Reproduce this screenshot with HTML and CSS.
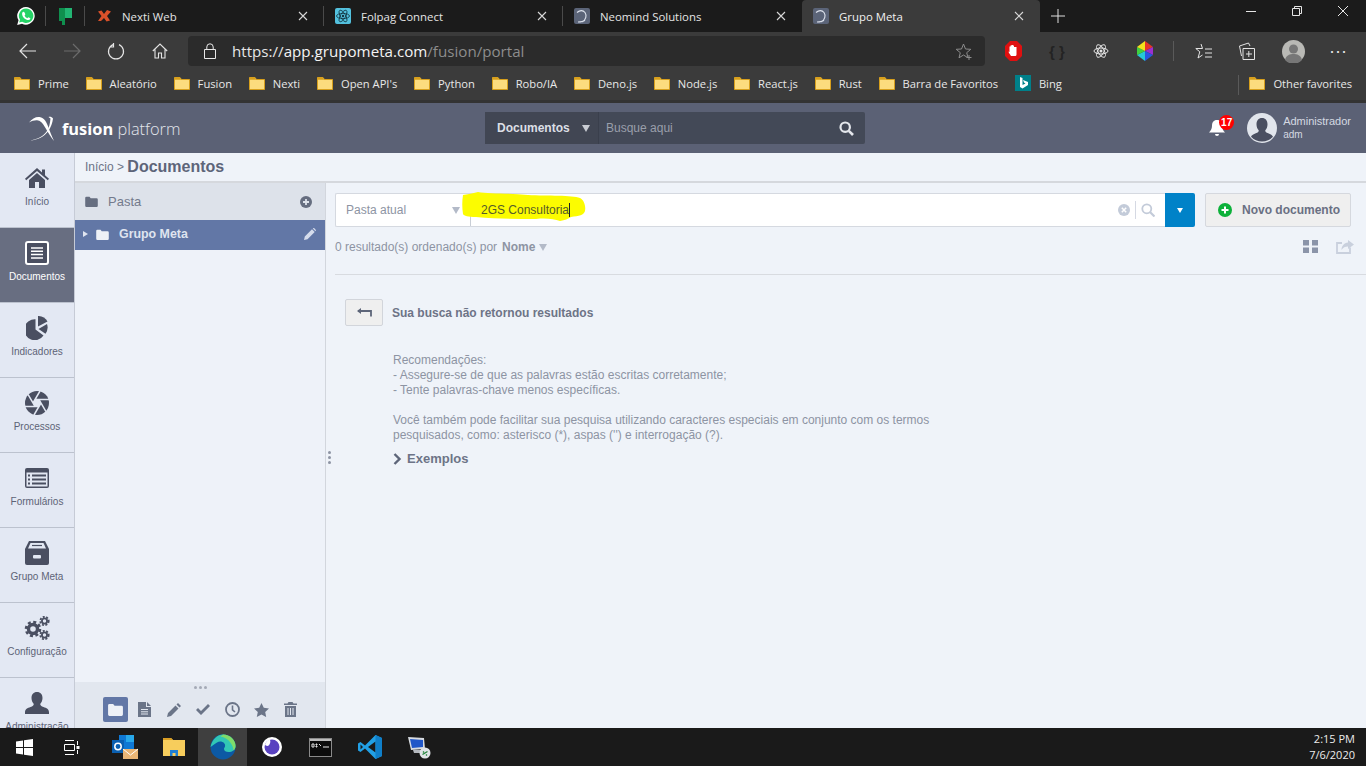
FILE: index.html
```html
<!DOCTYPE html>
<html lang="en">
<head>
    <meta charset="UTF-8">
    <title>Grupo Meta</title>
    <link rel="stylesheet" href="styles.css">
</head>
<body>
    <svg class="defs" width="0" height="0">
        <symbol id="bm-folder" viewBox="0 0 16 16"><path d="M.5 2.500h5.500l1.500 2h8v10H.5z" fill="#fcdc7e" stroke="#d79f1c"/><path d="M1 3h5l1.300 1.700H1z" fill="#d79f1c"/></symbol>
        <symbol id="fusion-mark" viewBox="0 0 16 16"><rect width="16" height="16" rx="2" fill="#5b6478"/><path d="M3 4.500c3-2.500 6-2.500 8 0 2 3 1 7-2.500 9.500M4 14c3 0 5.500-.5 7-2" fill="none" stroke="#dfe4ee" stroke-width="1.100"/></symbol>
        <symbol id="close-x" viewBox="0 0 10 10"><path d="M1 1l8 8M9 1l-8 8" stroke="#d8d8d8" stroke-width="1.100"/></symbol>
        <symbol id="fa-folder" viewBox="0 0 16 14"><path d="M1.500 1h4l1.500 2h7.500A1.500 1.500 0 0 1 16 4.500v8a1.500 1.500 0 0 1-1.500 1.500h-13A1.500 1.500 0 0 1 0 12.500v-10A1.500 1.500 0 0 1 1.500 1z"/></symbol>
    </svg>

    <div class="tabstrip">
        <div class="pin pin-first">
            <svg width="20" height="20" viewBox="0 0 20 20"><path d="M10 1a8.800 8.800 0 0 0-7.500 13.300L1.200 19l4.800-1.300A8.800 8.800 0 1 0 10 1z" fill="#fff"/><path d="M10 2.600a7.200 7.200 0 0 0-6 11.100l-.8 2.900 3-.8A7.200 7.200 0 1 0 10 2.600z" fill="#25d366"/><path d="M7.400 5.800c-.5 0-1.300.7-1.300 2.100 0 2.800 3.500 6.200 6.300 6.200 1.400 0 2-.9 2-1.500 0-.5-1.700-1.300-2-1.300-.4 0-.8.900-1.100.9-.9-.2-2.500-1.700-2.700-2.700 0-.3.700-.7.700-1.100 0-.3-.7-2.600-1.900-2.600z" fill="#fff"/></svg>
        </div>
        <div class="pin">
            <svg width="13" height="17" viewBox="0 0 13 17"><path d="M0 0h6v17H3V13H0z" fill="#0f8f4e"/><path d="M6 0h7v10H6z" fill="#22b573"/></svg>
        </div>
        <div class="tab">
            <svg class="tab-icon" width="16" height="12" viewBox="-2 0 16 12"><path d="M0 1.500l3.500-1 2.500 3.500L9 0l4 1.500-4 4.500 3 4.500-3.500 1-2.500-3.500-3 3L0 11l3.500-5z" fill="#d9512a"/></svg>
            <span class="tab-title">Nexti Web</span>
            <svg class="tab-close" width="10" height="10"><use href="#close-x"/></svg>
        </div>
        <div class="tab">
            <svg class="tab-icon" width="16" height="16" viewBox="0 0 16 16"><rect width="16" height="16" rx="2" fill="#53c1de"/><g fill="none" stroke="#12343f" stroke-width=".8"><ellipse cx="8" cy="8" rx="6.500" ry="2.600"/><ellipse cx="8" cy="8" rx="6.500" ry="2.600" transform="rotate(60 8 8)"/><ellipse cx="8" cy="8" rx="6.500" ry="2.600" transform="rotate(120 8 8)"/></g><circle cx="8" cy="8" r="1.200" fill="#12343f"/></svg>
            <span class="tab-title">Folpag Connect</span>
            <svg class="tab-close" width="10" height="10"><use href="#close-x"/></svg>
        </div>
        <div class="tab tab-last">
            <svg class="tab-icon" width="16" height="16"><use href="#fusion-mark"/></svg>
            <span class="tab-title">Neomind Solutions</span>
            <svg class="tab-close" width="10" height="10"><use href="#close-x"/></svg>
        </div>
        <div class="tab tab-active">
            <svg class="tab-icon" width="16" height="16"><use href="#fusion-mark"/></svg>
            <span class="tab-title">Grupo Meta</span>
            <svg class="tab-close" width="10" height="10"><use href="#close-x"/></svg>
        </div>
        <svg class="new-tab" width="14" height="14" viewBox="0 0 14 14"><path d="M7 0v14M0 7h14" stroke="#e0e0e0"/></svg>
        <div class="window-buttons">
            <svg width="10" height="10" viewBox="0 0 10 10"><path d="M0 5.500h10" stroke="#e6e6e6"/></svg>
            <svg width="10" height="10" viewBox="0 0 10 10"><path d="M.5 2.500h7v7h-7zM2.500 2.500v-2h7v7h-2" fill="none" stroke="#e6e6e6"/></svg>
            <svg width="10" height="10" viewBox="0 0 10 10"><path d="M0 0l10 10M10 0L0 10" stroke="#e6e6e6"/></svg>
        </div>
    </div>

    <div class="toolbar">
        <svg class="tool" width="18" height="16" viewBox="0 0 18 16"><path d="M17 8H1M8 1L1 8l7 7" fill="none" stroke="#e4e4e4" stroke-width="1.200"/></svg>
        <svg class="tool" width="18" height="16" viewBox="0 0 18 16"><path d="M1 8h16M10 1l7 7-7 7" fill="none" stroke="#6c6c6c" stroke-width="1.200"/></svg>
        <svg class="tool" width="18" height="18" viewBox="0 0 18 18"><path d="M6 2.600A7.500 7.500 0 1 0 12 2.600M6.500 1v4H2.500" fill="none" stroke="#e4e4e4" stroke-width="1.200"/></svg>
        <svg class="tool" width="16" height="16" viewBox="0 0 16 16"><path d="M.8 8L8 1l7.200 7M3 6.500V15h3.500v-5h3v5H13V6.500" fill="none" stroke="#e4e4e4" stroke-width="1.100"/></svg>
        <div class="address">
            <svg class="lock" width="12" height="16" viewBox="0 0 12 16"><path d="M.5 6.500h11v9H.5zM2.800 6.500V4a3.200 3.200 0 0 1 6.400 0v2.500" fill="none" stroke="#e8e8e8"/></svg>
            <span class="url">https://<b>app.grupometa.com</b><i>/fusion/portal</i></span>
            <svg class="fav-add" width="17" height="17" viewBox="0 0 17 17"><path d="M7.500 1l2 5 5.300.3-4.100 3.400 1.300 5.100-4.500-2.800L3 14.800l1.300-5.100L.2 6.300 5.500 6z" fill="none" stroke="#8c8c8c"/><path d="M13 12v5M10.500 14.500h5" stroke="#8c8c8c"/></svg>
        </div>
        <div class="extensions">
            <svg width="17" height="20" viewBox="0 0 17 20"><path d="M5 0h7l5 5v10l-5 5H5l-5-5V5z" fill="#e01010"/><path d="M6 15c-1-2-2.500-3-2.500-4.500l1 .5V5.500h1V4.500h1v-.5h1.500v.5h1V6h1l1.500 0v7.500c0 1-.8 1.500-1.500 1.500z" fill="#fff"/></svg>
            <span class="ext-braces">{ }</span>
            <svg width="16" height="18" viewBox="0 0 16 18"><g fill="none" stroke="#e4e4e4"><ellipse cx="8" cy="9" rx="7" ry="3"/><ellipse cx="8" cy="9" rx="7" ry="3" transform="rotate(60 8 9)"/><ellipse cx="8" cy="9" rx="7" ry="3" transform="rotate(120 8 9)"/></g><circle cx="8" cy="9" r="1.500" fill="#e4e4e4"/></svg>
            <svg width="16" height="20" viewBox="0 0 16 20"><path d="M8 10L8 0 16 6z" fill="#e5342a"/><path d="M8 10l8-4v8z" fill="#9b2fd0"/><path d="M8 10l8 4-8 6z" fill="#2a55e0"/><path d="M8 10v10l-8-6z" fill="#25c9d8"/><path d="M8 10l-8 4V6z" fill="#3fd13f"/><path d="M8 10L0 6l8-6z" fill="#f3e21c"/></svg>
            <span class="tool-sep"></span>
            <svg width="17" height="17" viewBox="0 0 17 17"><path d="M6 1l1.500 4.500H.8l4 3.300L3 15l4.500-3" fill="none" stroke="#e4e4e4"/><path d="M10 6h7M10 10h7M10 14h7" stroke="#e4e4e4"/></svg>
            <svg width="16" height="18" viewBox="0 0 16 18"><path d="M4 6.500h11.500v11H4zM9.800 9v6M7 12h6" fill="none" stroke="#e4e4e4"/><path d="M2.500 14L.5 4l9-3 1.500 3" fill="none" stroke="#e4e4e4"/></svg>
            <svg width="23" height="23" viewBox="0 0 23 23"><circle cx="11.500" cy="11.500" r="11.500" fill="#b9b9b5"/><circle cx="11.500" cy="9" r="4.500" fill="#777"/><path d="M3 20c1-5 5-6 8.500-6s7.500 1 8.500 6a11.500 11.500 0 0 1-17 0z" fill="#777"/></svg>
            <span class="more-dots">···</span>
        </div>
    </div>

    <div class="bookmarks">
        <div class="bookmark"><svg width="16" height="16"><use href="#bm-folder"/></svg>Prime</div>
        <div class="bookmark"><svg width="16" height="16"><use href="#bm-folder"/></svg>Aleatório</div>
        <div class="bookmark"><svg width="16" height="16"><use href="#bm-folder"/></svg>Fusion</div>
        <div class="bookmark"><svg width="16" height="16"><use href="#bm-folder"/></svg>Nexti</div>
        <div class="bookmark"><svg width="16" height="16"><use href="#bm-folder"/></svg>Open API's</div>
        <div class="bookmark"><svg width="16" height="16"><use href="#bm-folder"/></svg>Python</div>
        <div class="bookmark"><svg width="16" height="16"><use href="#bm-folder"/></svg>Robo/IA</div>
        <div class="bookmark"><svg width="16" height="16"><use href="#bm-folder"/></svg>Deno.js</div>
        <div class="bookmark"><svg width="16" height="16"><use href="#bm-folder"/></svg>Node.js</div>
        <div class="bookmark"><svg width="16" height="16"><use href="#bm-folder"/></svg>React.js</div>
        <div class="bookmark"><svg width="16" height="16"><use href="#bm-folder"/></svg>Rust</div>
        <div class="bookmark"><svg width="16" height="16"><use href="#bm-folder"/></svg>Barra de Favoritos</div>
        <div class="bookmark"><svg width="16" height="16" viewBox="0 0 16 16"><rect width="16" height="16" fill="#00808a"/><path d="M5 2l2.500 1v7l3-1.500L9 7.500 8 5l5 2v3l-5.500 3.500L5 12z" fill="#fff"/></svg>Bing</div>
        <div class="bookmark other-favorites"><svg width="16" height="16"><use href="#bm-folder"/></svg>Other favorites</div>
    </div>

    <header class="app-header">
        <div class="logo">
            <svg width="26" height="25" viewBox="0 0 26 25"><path d="M0 6.500C3 2.500 7 .5 10.500 1c5 .7 7 5 9 10.500 1.200 3.500 3 8 5.500 13.500-3.500-4-6-9-8.500-13-2-3.500-4-7-7.500-7.500C6 4 3 5 0 6.500z" fill="#fff"/><path d="M1 24.500c7-1 13-4 17-9.500 2-3 3-7 3.500-12.500L19.500 1c2-.5 3.500.3 4.500 1.500-.5 4-2 9-5 13-4 5-10 8.500-18 9z" fill="#fff"/></svg>
            <span class="logo-text"><b>fusion</b> platform</span>
        </div>
        <div class="global-search">
            <div class="global-scope">Documentos<span class="tri"></span></div>
            <span class="global-placeholder">Busque aqui</span>
            <svg width="15" height="15" viewBox="0 0 15 15"><circle cx="6.200" cy="6.200" r="4.700" fill="none" stroke="#e4e7ec" stroke-width="2.200"/><path d="M9.800 9.800L14 14" stroke="#e4e7ec" stroke-width="2.600"/></svg>
        </div>
        <div class="user-area">
            <div class="bell">
                <svg width="18" height="18" viewBox="0 0 18 18"><path d="M9 1c-3.500 0-5 2.500-5 6 0 3-1.500 5-3 6.500h16C15.500 12 14 10 14 7c0-3.500-1.500-6-5-6zM7 15h4a2 2 0 0 1-4 0z" fill="#fff"/></svg>
                <span class="badge">17</span>
            </div>
            <svg class="avatar" width="30" height="30" viewBox="0 0 30 30"><circle cx="15" cy="15" r="15" fill="#e1e5ec"/><path d="M15 5c3.500 0 5.500 2.500 5.500 6.500 0 2.500-1 4.500-2.300 6 .2 1.500 1 2 3 2.700 2.300.8 4 1.700 4.800 3.500a15 15 0 0 1-22 0c.8-1.800 2.500-2.700 4.800-3.500 2-.7 2.800-1.200 3-2.700-1.300-1.500-2.300-3.500-2.300-6C9.500 7.500 11.500 5 15 5z" fill="#4a4f61"/></svg>
            <div class="user-text">
                <span class="user-name">Administrador</span>
                <span class="user-login">adm</span>
            </div>
        </div>
    </header>

    <div class="app-body">
        <nav class="sidebar">
            <a class="nav-item">
                <svg width="24" height="24" viewBox="0 0 24 20"><path d="M12 0l5 4.500V1.500h3v5.700l4 3.600-1.200 1.400L12 3 1.200 12.200 0 10.800zM4 12l8-7 8 7v8h-6v-6h-4v6H4z"/></svg>
                Início
            </a>
            <a class="nav-item nav-active">
                <svg width="24" height="24" viewBox="0 0 24 24"><rect x="1" y="1" width="22" height="22" rx="2" fill="#4a4f61" stroke="#fff" stroke-width="2"/><path d="M6 7h12M6 10.300h12M6 13.600h12M6 17h12" stroke="#fff" stroke-width="1.500"/></svg>
                Documentos
            </a>
            <a class="nav-item">
                <svg width="22" height="24" viewBox="0 0 22 24"><path d="M9.500 3.200V13.500l8 6A10.500 10.500 0 1 1 9.500 3.200z"/><path d="M12 0v10.500l9.500-5A10.500 10.500 0 0 0 12 0z"/><path d="M12.500 13l8.500-5a10.500 10.500 0 0 1-1.500 9.700z"/></svg>
                Indicadores
            </a>
            <a class="nav-item">
                <svg width="24" height="24" viewBox="0 0 24 24"><circle cx="12" cy="12" r="12"/><path d="M16 12l-2-3.460h-4L8 12l2 3.460h4z" fill="#e3e8f3"/><g stroke="#e3e8f3" stroke-width="1.500"><path d="M14 8.540L21 20.600M16 12L9 24M14 15.460H0M10 15.460L3 3.400M8 12L15 0M10 8.540H24"/></g></svg>
                Processos
            </a>
            <a class="nav-item">
                <svg width="24" height="24" viewBox="0 0 24 20"><rect width="24" height="20" rx="2"/><rect x="1.500" y="4.500" width="21" height="14" fill="#e3e8f3"/><path d="M3 7.500h2M7 7.500h14M3 11.500h2M7 11.500h14M3 15.500h2M7 15.500h14" stroke="#4a4f61" stroke-width="2"/></svg>
                Formulários
            </a>
            <a class="nav-item">
                <svg width="24" height="24" viewBox="0 0 24 24"><path d="M4 0h16l4 8v14a2 2 0 0 1-2 2H2a2 2 0 0 1-2-2V8z"/><path d="M5.500 2h13l2.500 5.500H3z" fill="#e3e8f3"/><path d="M7 4.500h10" stroke="#4a4f61" stroke-width="1.200"/><rect x="8" y="14" width="8" height="3.500" rx="1" fill="#e3e8f3"/></svg>
                Grupo Meta
            </a>
            <a class="nav-item">
                <svg width="26" height="24" viewBox="0 0 26 24"><g fill="none" stroke="#4a4f61"><circle cx="9" cy="13" r="4.500" stroke-width="3.400"/><circle cx="9" cy="13" r="7" stroke-width="2.600" stroke-dasharray="3 2.500"/><circle cx="20.500" cy="5" r="2.600" stroke-width="1.800"/><circle cx="20.500" cy="5" r="4.200" stroke-width="1.800" stroke-dasharray="2 1.500"/><circle cx="20.500" cy="19" r="2.600" stroke-width="1.800"/><circle cx="20.500" cy="19" r="4.200" stroke-width="1.800" stroke-dasharray="2 1.500"/></g></svg>
                Configuração
            </a>
            <a class="nav-item">
                <svg width="24" height="24" viewBox="0 0 24 22"><path d="M12 0c3.500 0 5.500 2.500 5.500 6 0 2.500-1 4.500-2.300 6 .2 1.600 1 2.200 3.300 3 3 1 5.500 2 5.500 5.500V22H0v-1.500C0 17 2.500 16 5.500 15c2.300-.8 3.100-1.400 3.300-3C7.500 10.500 6.500 8.500 6.500 6 6.500 2.500 8.500 0 12 0z"/></svg>
                Administração
            </a>
        </nav>

        <div class="workspace">
            <div class="breadcrumb">Início &gt; <strong>Documentos</strong></div>
            <div class="panes">
                <aside class="tree-pane">
                    <div class="tree-head">
                        <svg width="13" height="11"><use href="#fa-folder"/></svg>
                        <span class="tree-head-title">Pasta</span>
                        <svg width="12" height="12" viewBox="0 0 12 12"><circle cx="6" cy="6" r="6" fill="#666e80"/><path d="M6 3v6M3 6h6" stroke="#dde2ea" stroke-width="1.800"/></svg>
                    </div>
                    <div class="tree-row">
                        <span class="tree-caret"></span>
                        <svg width="13" height="11"><use href="#fa-folder"/></svg>
                        <span class="tree-row-title">Grupo Meta</span>
                        <svg width="12" height="12" viewBox="0 0 12 12"><path d="M0 12l.8-3.500L8 1.300 10.700 4 3.500 11.200zM8.800.5l.7-.5c.5-.2 2.300 1.600 2.500 2.300l-.6.900z" fill="#d5dcec"/></svg>
                    </div>
                    <div class="tree-spacer"></div>
                    <div class="tree-foot">
                        <div class="foot-grip"><span></span><span></span><span></span></div>
                        <div class="foot-icons">
                            <span class="foot-btn foot-active"><svg width="15" height="13"><use href="#fa-folder"/></svg></span>
                            <span class="foot-btn"><svg width="13" height="15" viewBox="0 0 13 15"><path d="M0 0h8v5h5v10H0zM9 0l4 4H9z"/><path d="M3 7.500h7M3 9.800h7M3 12h7" stroke="#e2e7ef"/></svg></span>
                            <span class="foot-btn"><svg width="14" height="14" viewBox="0 0 14 14"><path d="M0 14l1-4 7.500-7.500 3 3L4 13zM9.500 1.500L11 0l3 3-1.500 1.500z"/></svg></span>
                            <span class="foot-btn"><svg width="14" height="11" viewBox="0 0 14 11"><path d="M0 6l2-2 3 3 7-7 2 2-9 9z"/></svg></span>
                            <span class="foot-btn"><svg width="15" height="15" viewBox="0 0 15 15"><circle cx="7.500" cy="7.500" r="6.500" fill="none" stroke="#6b7588" stroke-width="1.800"/><path d="M7.500 3.500v4.300l2.500 2.200" fill="none" stroke="#6b7588" stroke-width="1.600"/></svg></span>
                            <span class="foot-btn"><svg width="15" height="14" viewBox="0 0 15 14"><path d="M7.500 0l2.300 4.800 5.200.6-3.800 3.600 1 5.100-4.700-2.600L2.800 14l1-5.100L0 5.400l5.200-.6z"/></svg></span>
                            <span class="foot-btn"><svg width="13" height="15" viewBox="0 0 13 15"><path d="M4.500 0h4l1 1.500H13V3H0V1.500h3.500zM1 4h11v11H1z"/><path d="M4 6v7M6.500 6v7M9 6v7" stroke="#e2e7ef"/></svg></span>
                        </div>
                    </div>
                </aside>

                <div class="splitter"><span></span><span></span><span></span></div>

                <main class="content">
                    <div class="search-row">
                        <div class="scope-select">Pasta atual<span class="tri tri-light"></span></div>
                        <div class="search-input">
                            <span class="search-value">2GS Consultoria</span>
                            <svg width="12" height="12" viewBox="0 0 12 12"><circle cx="6" cy="6" r="6" fill="#c3cbd9"/><path d="M3.800 3.800l4.400 4.400M8.200 3.800L3.800 8.200" stroke="#fff" stroke-width="1.500"/></svg>
                            <span class="search-sep"></span>
                            <svg width="14" height="14" viewBox="0 0 14 14"><circle cx="5.800" cy="5.800" r="4.500" fill="none" stroke="#c3cbd9" stroke-width="1.800"/><path d="M9 9l4.500 4.500" stroke="#c3cbd9" stroke-width="2.200"/></svg>
                        </div>
                        <div class="search-drop"><span class="tri tri-white"></span></div>
                        <div class="new-doc">
                            <svg width="14" height="14" viewBox="0 0 14 14"><circle cx="7" cy="7" r="7" fill="#0cb13a"/><path d="M7 3.500v7M3.500 7h7" stroke="#fff" stroke-width="2"/></svg>
                            Novo documento
                        </div>
                        <!-- yellow marker stroke drawn on top of the field -->
                        <svg class="marker" width="124" height="30" viewBox="0 0 124 30"><path d="M1 3C8 2 12 1 16 0c10 2 30 1 50 3 20 1 44 0 52 3 4 2 6 8 5 13-1 4-6 5-14 6-3 2-6 3-11 4-6-2-14-3-24-2-20 0-40 0-60-2-8 0-12-1-13-3C0 16 0 9 1 3z" fill="#fcfc00"/></svg>
                    </div>
                    <div class="result-row">
                        <span>0 resultado(s) ordenado(s) por</span>
                        <b class="sort-name">Nome</b><span class="tri tri-light tri-small"></span>
                        <svg class="grid-icon" width="15" height="13" viewBox="0 0 15 13"><path d="M0 0h6v5.500H0zM9 0h6v5.500H9zM0 7.500h6V13H0zM9 7.500h6V13H9z" fill="#8b94a9"/></svg>
                        <svg class="share-icon" width="18" height="14" viewBox="0 0 18 14"><path d="M14 7.500V13H1V3h5" fill="none" stroke="#c9d0dd" stroke-width="1.800"/><path d="M12 0l6 4.500L12 9V6.500C9 6.500 7 7.500 5.500 10c0-4 2.500-7 6.500-7.500z" fill="#c9d0dd"/></svg>
                    </div>
                    <div class="no-results">
                        <div class="no-results-head">
                            <span class="back-btn"><svg width="15" height="9" viewBox="0 0 15 9"><path d="M14 8.500V3H1" fill="none" stroke="#5d6579" stroke-width="1.800"/><path d="M4 0v6L0 3z" fill="#5d6579"/></svg></span>
                            <b>Sua busca não retornou resultados</b>
                        </div>
                        <p class="tips">Recomendações:<br>- Assegure-se de que as palavras estão escritas corretamente;<br>- Tente palavras-chave menos específicas.</p>
                        <p class="tips">Você também pode facilitar sua pesquisa utilizando caracteres especiais em conjunto com os termos<br>pesquisados, como: asterisco (*), aspas ('') e interrogação (?).</p>
                        <div class="examples">
                            <svg width="9" height="12" viewBox="0 0 9 12"><path d="M1.500 1l5 5-5 5" fill="none" stroke="#5d6579" stroke-width="2.400"/></svg>
                            Exemplos
                        </div>
                    </div>
                </main>
            </div>
        </div>
    </div>

    <footer class="taskbar">
        <div class="task task-start"><svg width="17" height="17" viewBox="0 0 17 17"><path d="M0 2.500l7-1v6.500H0zM8 1.300L17 0v8H8zM0 9h7v6.500l-7-1zM8 9h9v8l-9-1.300z" fill="#fff"/></svg></div>
        <div class="task task-start"><svg width="16" height="15" viewBox="0 0 16 15"><path d="M.5 4.500h10v6H.5zM1 .5h9M1 14.500h9M13.500 1v4M13.500 10v4" fill="none" stroke="#fff"/><rect x="12.500" y="6" width="3" height="3" fill="#fff"/></svg></div>
        <div class="task task-gap"><svg width="26" height="24" viewBox="0 0 26 24"><path d="M7 0h15v15H7z" fill="#0f78d4"/><path d="M14 0h8v7h-8z" fill="#28a8ea"/><rect y="5" width="12" height="13" fill="#0a5fb0"/><circle cx="6" cy="11.500" r="3.200" fill="none" stroke="#fff" stroke-width="1.500"/><path d="M11 14h15v10H11z" fill="#eab676"/><path d="M11 14l7.500 6 7.500-6" fill="none" stroke="#fff"/></svg></div>
        <div class="task"><svg width="22" height="18" viewBox="0 0 22 18"><path d="M0 0h8l2 2h12v16H0z" fill="#f7cd5c"/><path d="M0 0h8l2 2H0z" fill="#d99e24"/><path d="M7 12h8v6H7z" fill="#1f7fd4"/><rect x="9.500" y="15" width="3" height="3" fill="#f7cd5c"/></svg></div>
        <div class="task task-open"><svg width="26" height="26" viewBox="0 0 26 26"><circle cx="13" cy="13" r="12.500" fill="#0c59a4"/><path d="M.5 13C2 5 8 .5 13 .5c7 0 12.500 5.500 12.500 11.500 0 4-3.500 6-7 6-2.500 0-4.500-1-4.500-3 0-1 .6-1.500 1-2.500C16 9 11 6 7 8.500 3.500 10.500 2 12 .5 13z" fill="#32c7b5"/><path d="M13 .5c7 0 12.500 5.500 12.500 11.500 0 2-1 3.500-2 4.500 0-5-5-13-13-14z" fill="#7fdc6a"/></svg></div>
        <div class="task"><svg width="20" height="20" viewBox="0 0 20 20"><circle cx="10" cy="10" r="10" fill="#fff"/><circle cx="10" cy="10" r="7.500" fill="#5942c0"/><path d="M8 2.500A6 6 0 0 1 6 9a6 6 0 0 1-3-1 7.500 7.500 0 0 1 5-5.500z" fill="#fff"/></svg></div>
        <div class="task"><svg width="23" height="19" viewBox="0 0 23 19"><rect x=".5" y=".5" width="22" height="18" fill="#0c0c0c" stroke="#8a8a8a"/><path d="M1 1h21v2H1z" fill="#bcbcbc"/><path d="M3 6h2v3H3zM7 6h1v1H7zM7 8h1v1H7zM10 6l2 2M14 9h6" stroke="#e8e8e8"/></svg></div>
        <div class="task"><svg width="24" height="24" viewBox="0 0 24 24"><path d="M17.500 0L24 3v18l-6.500 3L7 13.500 2.500 17 0 15.500V8.500L2.500 7 7 10.500z" fill="#22a0e5"/><path d="M17.500 6.500L10 12l7.500 5.500z" fill="#1a1a1a"/><path d="M17.500 0L24 3v18l-6.500 3z" fill="#0f7fc9"/><path d="M2.500 9.500L5 12l-2.500 2.500z" fill="#1a1a1a"/></svg></div>
        <div class="task"><svg width="24" height="24" viewBox="0 0 24 24"><path d="M1 2l16 1 1 11-14 1z" fill="#d7dbe0"/><path d="M3 4l13 1v7L5 13z" fill="#2157c8"/><path d="M6 15h9l2 3H7z" fill="#b4b8be"/><circle cx="18" cy="18" r="5.500" fill="#dfe3e6"/><path d="M15.500 19.500l5-3M16 16.500l1 1M19 19.500l1 1" stroke="#23863a" stroke-width="1.300"/></svg></div>
        <div class="clock"><span>2:15 PM</span><span>7/6/2020</span></div>
    </footer>
</body>
</html>
```

FILE: styles.css
```css
* {
    box-sizing: border-box;
}
html, body {
    height: 100%;
}
body {
    margin: 0;
    display: flex;
    flex-direction: column;
    overflow: hidden;
    font-family: "Liberation Sans", Arial, sans-serif;
    background-color: #eff3f9;
}
.defs {
    position: absolute;
}
svg {
    flex-shrink: 0;
    display: block;
}

/* browser chrome */
.tabstrip {
    height: 32px;
    display: flex;
    align-items: center;
    background-color: #1b1b1b;
    color: #e4e4e4;
    font-family: "Open Sans", sans-serif;
    font-size: 11.4px;
}
.pin {
    width: 39px;
    height: 100%;
    display: flex;
    align-items: center;
    justify-content: center;
    position: relative;
}
.pin-first {
    width: 46px;
    padding-left: 6px;
}
.pin::after, .tab::after {
    content: "";
    width: 1px;
    height: 20px;
    background-color: #4a4a4a;
    position: absolute;
    right: 0;
    top: 6px;
}
.tab {
    width: 239px;
    height: 100%;
    display: flex;
    align-items: center;
    padding: 0 16px 0 11px;
    position: relative;
}
.tab-icon {
    margin-right: 10px;
}
.tab-title {
    flex: 1;
}
.tab-last::after, .tab-active::after {
    display: none;
}
.tab-active {
    width: 238px;
    background-color: #3b3b3b;
    border-radius: 4px 4px 0 0;
    color: #f0f0f0;
}
.new-tab {
    margin-left: 11px;
}
.window-buttons {
    margin-left: auto;
    display: flex;
    gap: 36px;
    padding-right: 18px;
    align-self: flex-start;
    padding-top: 6px;
}
.toolbar {
    height: 34px;
    display: flex;
    align-items: center;
    background-color: #3b3b3b;
    padding: 4px 0 0 19px;
}
.tool {
    margin-right: 26px;
}
.tool:nth-child(3) {
    margin-right: 27px;
}
.tool:nth-child(4) {
    margin-right: 20px;
}
.address {
    width: 797px;
    flex-shrink: 0;
    height: 30px;
    background-color: #2b2b2b;
    border-radius: 4px;
    display: flex;
    align-items: center;
    padding: 0 12px 0 16px;
}
.lock {
    margin-right: 16px;
}
.url {
    flex: 1;
    font-family: "Open Sans", sans-serif;
    font-size: 15.15px;
    color: #e6e6e6;
}
.url b {
    font-weight: 400;
    color: #f4f4f4;
}
.url i {
    font-style: normal;
    color: #8d8d8d;
}
.extensions {
    display: grid;
    grid-template-columns: 44px 44px 44px 44px 12px 48px 40px 52px 38px;
    justify-items: center;
    align-items: center;
    padding-left: 6px;
}
.ext-braces {
    color: #232323;
    font-size: 15px;
    font-weight: bold;
    white-space: nowrap;
}
.tool-sep {
    width: 1px;
    height: 20px;
    background-color: #5a5a5a;
}
.more-dots {
    color: #e4e4e4;
    font-size: 18px;
}
.bookmarks {
    height: 34px;
    display: flex;
    align-items: center;
    gap: 16.8px;
    padding-left: 14px;
    background-color: #3b3b3b;
    color: #e8e8e8;
    font-family: "Open Sans", sans-serif;
    font-size: 11.2px;
}
.bookmark {
    display: flex;
    align-items: center;
    gap: 8px;
}
.other-favorites {
    margin-left: auto;
    margin-right: 14px;
    position: relative;
}
.other-favorites::before {
    content: "";
    width: 1px;
    height: 20px;
    background-color: #5a5a5a;
    position: absolute;
    left: -11px;
    top: 0;
}

/* fusion header */
.app-header {
    height: 53px;
    flex-shrink: 0;
    display: flex;
    align-items: center;
    background-color: #5b6175;
    border-top: 3px solid #333;
    padding-left: 29px;
}
.logo {
    display: flex;
    align-items: center;
    gap: 7px;
    width: 456px;
}
.logo-text {
    font-family: "Open Sans", sans-serif;
    font-size: 16.4px;
    color: #e3e6ec;
    font-weight: 300;
}
.logo-text b {
    font-weight: 700;
    color: #fff;
}
.global-search {
    width: 380px;
    height: 32px;
    display: flex;
    align-items: center;
    background-color: #434957;
    border-radius: 2px;
    padding-right: 11px;
    font-size: 12px;
    color: #dcdfe5;
}
.global-scope {
    width: 114px;
    height: 100%;
    display: flex;
    align-items: center;
    padding-left: 12px;
    font-weight: bold;
    border-right: 1px solid #3a3f4c;
    background-color: #414653;
}
.global-placeholder {
    flex: 1;
    padding-left: 7px;
    color: #9a9fab;
}
.tri {
    width: 0;
    height: 0;
    border-left: 4px solid transparent;
    border-right: 4px solid transparent;
    border-top: 7px solid #c9ccd3;
    margin-left: 12px;
}
.tri-light {
    border-top-color: #b3bac8;
}
.tri-white {
    border-left-width: 3px;
    border-right-width: 3px;
    border-top: 5px solid #fff;
    margin: 0;
}
.tri-small {
    margin-left: 4px;
    margin-top: 4px;
}
.user-area {
    margin-left: auto;
    display: flex;
    align-items: center;
    padding-right: 15px;
}
.bell {
    position: relative;
    margin-right: 21px;
}
.badge {
    position: absolute;
    left: 11px;
    top: -4px;
    width: 15px;
    height: 15px;
    border-radius: 50%;
    background-color: #f00;
    color: #fff;
    font-size: 10px;
    font-weight: bold;
    line-height: 15px;
    text-align: center;
}
.avatar {
    margin-right: 6px;
}
.user-text {
    display: flex;
    flex-direction: column;
    color: #d5d9e2;
    font-size: 11px;
    line-height: 13px;
}
.user-login {
    font-size: 10px;
}

/* page body */
.app-body {
    flex: 1;
    min-height: 0;
    display: flex;
    overflow: hidden;
}
.sidebar {
    width: 75px;
    flex-shrink: 0;
    background-color: #e3e8f3;
    border-right: 1px solid #c6cbd6;
}
.nav-item {
    height: 75px;
    display: flex;
    flex-direction: column;
    align-items: center;
    justify-content: flex-start;
    border-bottom: 1px solid #bcc2ce;
    color: #5d6376;
    font-size: 10px;
    white-space: nowrap;
    padding-top: 13px;
}
.nav-item svg {
    margin-bottom: 6px;
    fill: #4a4f61;
}
.nav-active {
    background-color: #686e81;
    color: #fff;
}
.workspace {
    flex: 1;
    min-width: 0;
    display: flex;
    flex-direction: column;
}
.breadcrumb {
    height: 30px;
    flex-shrink: 0;
    display: flex;
    align-items: center;
    padding-left: 10px;
    border-bottom: 2px solid #d5d8dd;
    color: #6d7487;
    font-size: 12px;
    white-space: pre;
}
.breadcrumb strong {
    font-size: 16px;
    color: #5d6579;
}
.panes {
    flex: 1;
    min-height: 0;
    display: flex;
}

/* folder tree */
.tree-pane {
    width: 251px;
    flex-shrink: 0;
    display: flex;
    flex-direction: column;
    background-color: #eef2f9;
    border-right: 1px solid #d2d6dd;
}
.tree-head {
    height: 37px;
    display: flex;
    align-items: center;
    padding: 0 13px 0 10px;
    background-color: #dde2ea;
    color: #737a8c;
    font-size: 13px;
    fill: #666e80;
}
.tree-head-title {
    flex: 1;
    padding-left: 10px;
}
.tree-row {
    height: 30px;
    display: flex;
    align-items: center;
    padding: 0 9px 2px 8px;
    background-color: #6277a6;
    color: #dfe4ef;
    font-size: 12.4px;
    font-weight: bold;
    fill: #eef1f7;
}
.tree-caret {
    width: 0;
    height: 0;
    border-top: 3px solid transparent;
    border-bottom: 3px solid transparent;
    border-left: 5px solid #e0e5f0;
    margin-right: 8px;
}
.tree-row-title {
    flex: 1;
    padding-left: 10px;
}
.tree-spacer {
    flex: 1;
}
.tree-foot {
    height: 46px;
    background-color: #e2e7ef;
    fill: #6b7588;
}
.foot-grip {
    height: 15px;
    display: flex;
    justify-content: center;
    gap: 2px;
    padding-top: 4px;
}
.foot-grip span {
    width: 3px;
    height: 3px;
    border-radius: 50%;
    background-color: #a4aab6;
}
.foot-icons {
    display: flex;
    align-items: center;
    padding-left: 28px;
}
.foot-btn {
    width: 29.2px;
    height: 25px;
    display: flex;
    align-items: center;
    justify-content: center;
}
.foot-active {
    width: 25px;
    margin-right: 2px;
    background-color: #6277a6;
    border-radius: 2px;
    fill: #eef1f7;
}
.splitter {
    width: 6px;
    flex-shrink: 0;
    display: flex;
    flex-direction: column;
    align-items: center;
    gap: 2px;
    padding: 268px 0 0 0;
}
.splitter span {
    width: 3px;
    height: 3px;
    border-radius: 50%;
    background-color: #8d94a3;
}

/* search results */
.content {
    flex: 1;
    min-width: 0;
    padding: 10px 0 0 3px;
    color: #8d94a3;
    font-size: 12px;
}
.search-row {
    display: flex;
    height: 34px;
    position: relative;
}
.scope-select {
    width: 136px;
    display: flex;
    align-items: center;
    justify-content: space-between;
    padding: 0 10px 0 10px;
    background-color: #fff;
    border: 1px solid #d5d9e0;
    border-right: 1px solid #c9ced6;
    border-radius: 2px 0 0 2px;
}
.search-input {
    width: 694px;
    display: flex;
    align-items: center;
    padding: 0 10px 0 10px;
    background-color: #fff;
    border-top: 1px solid #d5d9e0;
    border-bottom: 1px solid #d5d9e0;
}
.search-value {
    flex: 1;
    position: relative;
    z-index: 2;
    color: #555b2a;
}
.search-value::after {
    content: "";
    display: inline-block;
    width: 1px;
    height: 14px;
    background-color: #222;
    vertical-align: -3px;
}
.search-sep {
    width: 1px;
    height: 18px;
    margin: 0 5px;
    background-color: #d5d9e3;
}
.search-drop {
    width: 30px;
    display: flex;
    align-items: center;
    justify-content: center;
    background-color: #0082c8;
    border-radius: 0 2px 2px 0;
}
.new-doc {
    width: 146px;
    margin-left: 10px;
    display: flex;
    align-items: center;
    gap: 10px;
    padding-left: 12px;
    background-color: #efefef;
    border: 1px solid #d5d8de;
    border-radius: 2px;
    color: #6a7083;
    font-weight: bold;
}
.marker {
    position: absolute;
    left: 127px;
    top: -1px;
    z-index: 1;
}
.result-row {
    height: 48px;
    display: flex;
    align-items: flex-start;
    padding-top: 13px;
    border-bottom: 1px solid #d8dbe0;
}
.sort-name {
    margin-left: 5px;
}
.grid-icon {
    margin-left: auto;
    margin-right: 18px;
}
.share-icon {
    margin-right: 12px;
}
.no-results {
    padding: 24px 0 0 10px;
}
.no-results-head {
    display: flex;
    align-items: center;
    gap: 9px;
    color: #6d7487;
}
.back-btn {
    width: 38px;
    height: 27px;
    display: flex;
    align-items: center;
    justify-content: center;
    background-color: #efefef;
    border: 1px solid #d2d5db;
    border-radius: 2px;
}
.tips {
    margin: 0 0 15px 48px;
    line-height: 15px;
}
.no-results-head + .tips {
    margin-top: 27px;
}
.tips + .examples {
    margin-top: -7px;
}
.examples {
    margin-left: 48px;
    display: flex;
    align-items: center;
    gap: 5px;
    color: #6d7487;
    font-size: 13px;
    font-weight: bold;
}

/* windows taskbar */
.taskbar {
    height: 38px;
    flex-shrink: 0;
    display: flex;
    align-items: stretch;
    background-color: #1a1a1a;
    color: #ececec;
    font-family: "Open Sans", sans-serif;
    font-size: 11px;
}
.task {
    width: 49px;
    display: flex;
    align-items: center;
    justify-content: center;
}
.task-start {
    width: 48px;
}
.task-gap {
    margin-left: 4px;
}
.task-open {
    background-color: #3f3f3f;
}
.clock {
    margin-left: auto;
    display: flex;
    flex-direction: column;
    justify-content: center;
    align-items: flex-end;
    line-height: 16px;
    padding-right: 11px;
}
```
